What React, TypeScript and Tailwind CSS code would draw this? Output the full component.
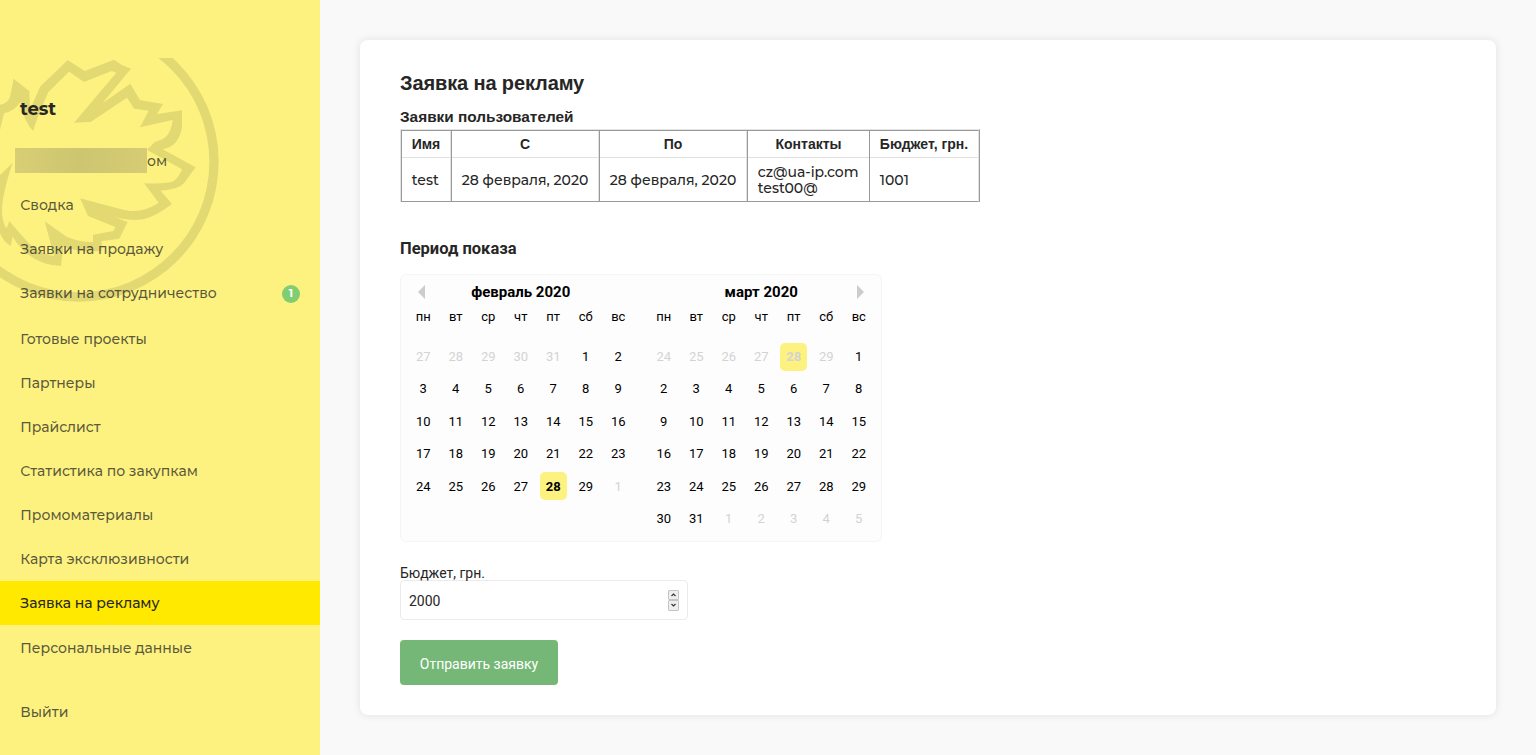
import React from "react";

type NavItem = { label: string; className: string; badge?: string };

const nav: NavItem[] = [
  { label: "Сводка", className: "h-11" },
  { label: "Заявки на продажу", className: "h-11" },
  { label: "Заявки на сотрудничество", className: "h-[46px]", badge: "1" },
  { label: "Готовые проекты", className: "h-11" },
  { label: "Партнеры", className: "h-11" },
  { label: "Прайслист", className: "h-11" },
  { label: "Статистика по закупкам", className: "h-11" },
  { label: "Промоматериалы", className: "h-11" },
  { label: "Карта эксклюзивности", className: "h-11" },
  { label: "Заявка на рекламу", className: "h-11 bg-[#ffe900] text-[#262626]" },
  { label: "Персональные данные", className: "h-11 mt-px" },
  { label: "Выйти", className: "h-11 mt-5" },
];

const weekdays = ["пн", "вт", "ср", "чт", "пт", "сб", "вс"];

const columns = [
  { title: "Имя", width: "w-[50px]", edge: "border-r", lines: ["test"] },
  { title: "С", width: "w-[148px]", edge: "border-r", lines: ["28 февраля, 2020"] },
  { title: "По", width: "w-[148px]", edge: "border-r", lines: ["28 февраля, 2020"] },
  { title: "Контакты", width: "w-[122px]", edge: "", lines: ["cz@ua-ip.com", "test00@"] },
  { title: "Бюджет, грн.", width: "w-[109px]", edge: "", lines: ["1001"] },
];

function Emblem() {
  return (
    <svg className="absolute top-[58px] left-0 h-[252px] w-80" viewBox="0 54 960 756" fill="#000" fillOpacity="0.1">
      <path
        fillRule="evenodd"
        d="M-184 365a420 420 0 1 0 840 0a420 420 0 1 0 -840 0zM-156 365a392 392 0 1 0 784 0a392 392 0 1 0 -784 0z"
      />
      <path d="M-20 200L0 194Q24 190 30 170L41 116L88 153L90 212Q102 180 120 140L203 60L254 93L342 59L366 75L393 86L308 189L391 131L420 180L489 192L471 222L546 211V262C540 300 520 323 488 328L587 382L552 430Q534 450 482 452L516 492Q470 528 430 538Q390 544 343 530L383 546L358 596L305 604V632Q240 638 190 620L183 678Q90 675 38 590L32 618Q10 605 0 580L-20 550V430L0 405L38 368Q4 470 6 520Q10 555 20 565L28 543Q80 605 100 622Q128 642 162 648L134 544L200 590Q235 606 279 606V584L340 573L346 561L264 528L240 475L376 511Q430 520 476 488L432 430Q500 432 520 424Q535 415 546 388L441 330L464 306C500 298 512 280 518 240L420 262L446 212L402 206L381 173L272 246L222 248L349 98L335 93L252 126L207 95L145 157Q120 210 99 273Q72 245 60 186Q46 212 12 220L0 270L-20 300Z" />
    </svg>
  );
}

type MonthProps = { before: number[]; length: number; after: number; selected: number; selectedMuted?: boolean; title: string; arrow: "left" | "right" };

function Month({ before, length, after, selected, selectedMuted, title, arrow }: MonthProps) {
  const cells = [
    ...before.map((n) => ({ n, muted: true, on: !!selectedMuted && n === selected })),
    ...Array.from({ length }, (_, i) => ({ n: i + 1, muted: false, on: !selectedMuted && i + 1 === selected })),
    ...Array.from({ length: after }, (_, i) => ({ n: i + 1, muted: true, on: false })),
  ];
  return (
    <div className="w-[227.5px]">
      <div className="grid h-8 grid-cols-[20px_1fr_20px] items-center pt-[2px] text-center text-[15px] leading-5 font-bold text-black">
        <svg className="ml-[11px] h-[14px] w-[7px]" viewBox="0 0 7 14">
          {arrow === "left" && <path d="M7 0v14L0 7z" fill="#ccc" />}
        </svg>
        <span>{title}</span>
        <svg className="ml-[2px] h-[14px] w-[7px]" viewBox="0 0 7 14">
          {arrow === "right" && <path d="M0 0v14l7-7z" fill="#ccc" />}
        </svg>
      </div>
      <div className="grid grid-cols-7 text-center text-[13px] leading-5 text-black">
        {weekdays.map((d) => (
          <span key={d}>{d}</span>
        ))}
      </div>
      <div className="mt-[13.4px] grid auto-rows-[32.45px] grid-cols-7 place-items-center text-[13px]">
        {cells.map((c, i) => (
          <span
            key={i}
            className={`flex h-7 w-[27px] items-center justify-center rounded-[5px] ${c.muted ? "text-[#d3d3d3]" : "text-black"} ${c.on ? "bg-[#fdf280] font-bold" : ""}`}
          >
            {c.n}
          </span>
        ))}
      </div>
    </div>
  );
}

function StepButton({ d }: { d: string }) {
  return (
    <span className="flex h-[10.5px] w-[11px] items-center justify-center rounded-[1px] border border-[#c4c4c4] bg-[#efefef]">
      <svg className="h-1 w-[5px]" viewBox="0 0 5 4" fill="none" stroke="#333" strokeWidth="1.1">
        <path d={d} />
      </svg>
    </span>
  );
}

export default function App() {
  return (
    <div className="flex h-[755px] w-full bg-[#f9f9f9] font-['Roboto',sans-serif] text-[#262626]">
      <aside className="relative w-80 shrink-0 bg-[#fdf280] font-['Montserrat','Inter',sans-serif]">
        <Emblem />
        <div className="relative">
          <h2 className="px-5 pt-24 text-lg leading-[26px] font-bold tracking-[-0.1px]">test</h2>
          <div className="mt-[26px] flex h-[25px] items-center pl-[15px] text-sm text-[#262626]/75">
            <span className="h-[25px] w-[132px] bg-linear-to-r from-[#d8ce75] via-[#cdc570] to-[#d6cc74]" />
            <span className="font-medium">ом</span>
          </div>
          <nav className="mt-[10px] text-sm font-medium text-[#262626]/75">
            {nav.map((item) => (
              <a key={item.label} className={`flex items-center justify-between pr-5 pl-[20.3px] ${item.className}`}>
                <span className={item.badge ? "pb-0.5" : ""}>{item.label}</span>
                {item.badge && (
                  <span className="flex size-[18px] items-center justify-center rounded-full bg-[#80cd72] text-[11px] font-bold text-white">{item.badge}</span>
                )}
              </a>
            ))}
          </nav>
        </div>
      </aside>
      <main className="flex-1 p-10">
        <section className="h-[675px] rounded-lg bg-white px-10 pt-[30px] shadow-[0_0_8px_rgba(0,0,0,0.1)]">
          <h1 className="font-['Liberation_Sans',sans-serif] text-xl leading-[26px] font-bold tracking-[-0.12px]">Заявка на рекламу</h1>
          <h3 className="mt-[11px] font-['Liberation_Sans',sans-serif] text-[15.36px] leading-5 font-bold">Заявки пользователей</h3>
          <div className="mt-0.5 h-[73px] w-[580px] border-t border-r border-l border-t-[#e3e3e3] border-r-[#999] border-l-[#e3e3e3]">
            <div className="flex h-full border-t border-r border-b border-t-[#999] border-r-[#e3e3e3] border-b-[#999]">
              {columns.map((col) => (
                <div key={col.title} className={`flex flex-col border-l border-l-[#999] border-r-[#e3e3e3] text-sm ${col.edge} ${col.width}`}>
                  <div className="flex h-[27px] items-center justify-center border-b border-[#e0e0e0] font-['Liberation_Sans',sans-serif] font-bold whitespace-nowrap">
                    {col.title}
                  </div>
                  <div className="flex flex-1 flex-col justify-center pt-px pl-[9.8px] font-['Montserrat','Inter',sans-serif] leading-4 font-medium whitespace-nowrap">
                    {col.lines.map((line) => (
                      <span key={line}>{line}</span>
                    ))}
                  </div>
                </div>
              ))}
            </div>
          </div>
          <h2 className="mt-[35px] text-[16.5px] leading-6 font-bold">Период показа</h2>
          <div className="mt-[13px] h-[268px] w-[482px] rounded-md border border-[#f5f5f5] bg-[#fdfdfd]">
            <div className="flex gap-[13px] px-[6px]">
              <Month title="февраль 2020" arrow="left" before={[27, 28, 29, 30, 31]} length={29} after={1} selected={28} />
              <Month title="март 2020" arrow="right" before={[24, 25, 26, 27, 28, 29]} length={31} after={5} selected={28} selectedMuted />
            </div>
          </div>
          <div className="mt-[22px] h-4 text-sm leading-[18px]">Бюджет, грн.</div>
          <div className="flex h-10 w-72 items-center justify-between rounded border border-[#ebebeb] bg-white px-2 text-sm">
            <span className="pt-0.5">2000</span>
            <span className="flex flex-col">
              <StepButton d="M.5 3l2-2 2 2" />
              <StepButton d="M.5 1l2 2 2-2" />
            </span>
          </div>
          <button className="mt-5 flex h-[45px] w-[158px] items-center justify-center rounded bg-[#75b776] pt-0.5 text-sm text-white">Отправить заявку</button>
        </section>
      </main>
    </div>
  );
}
